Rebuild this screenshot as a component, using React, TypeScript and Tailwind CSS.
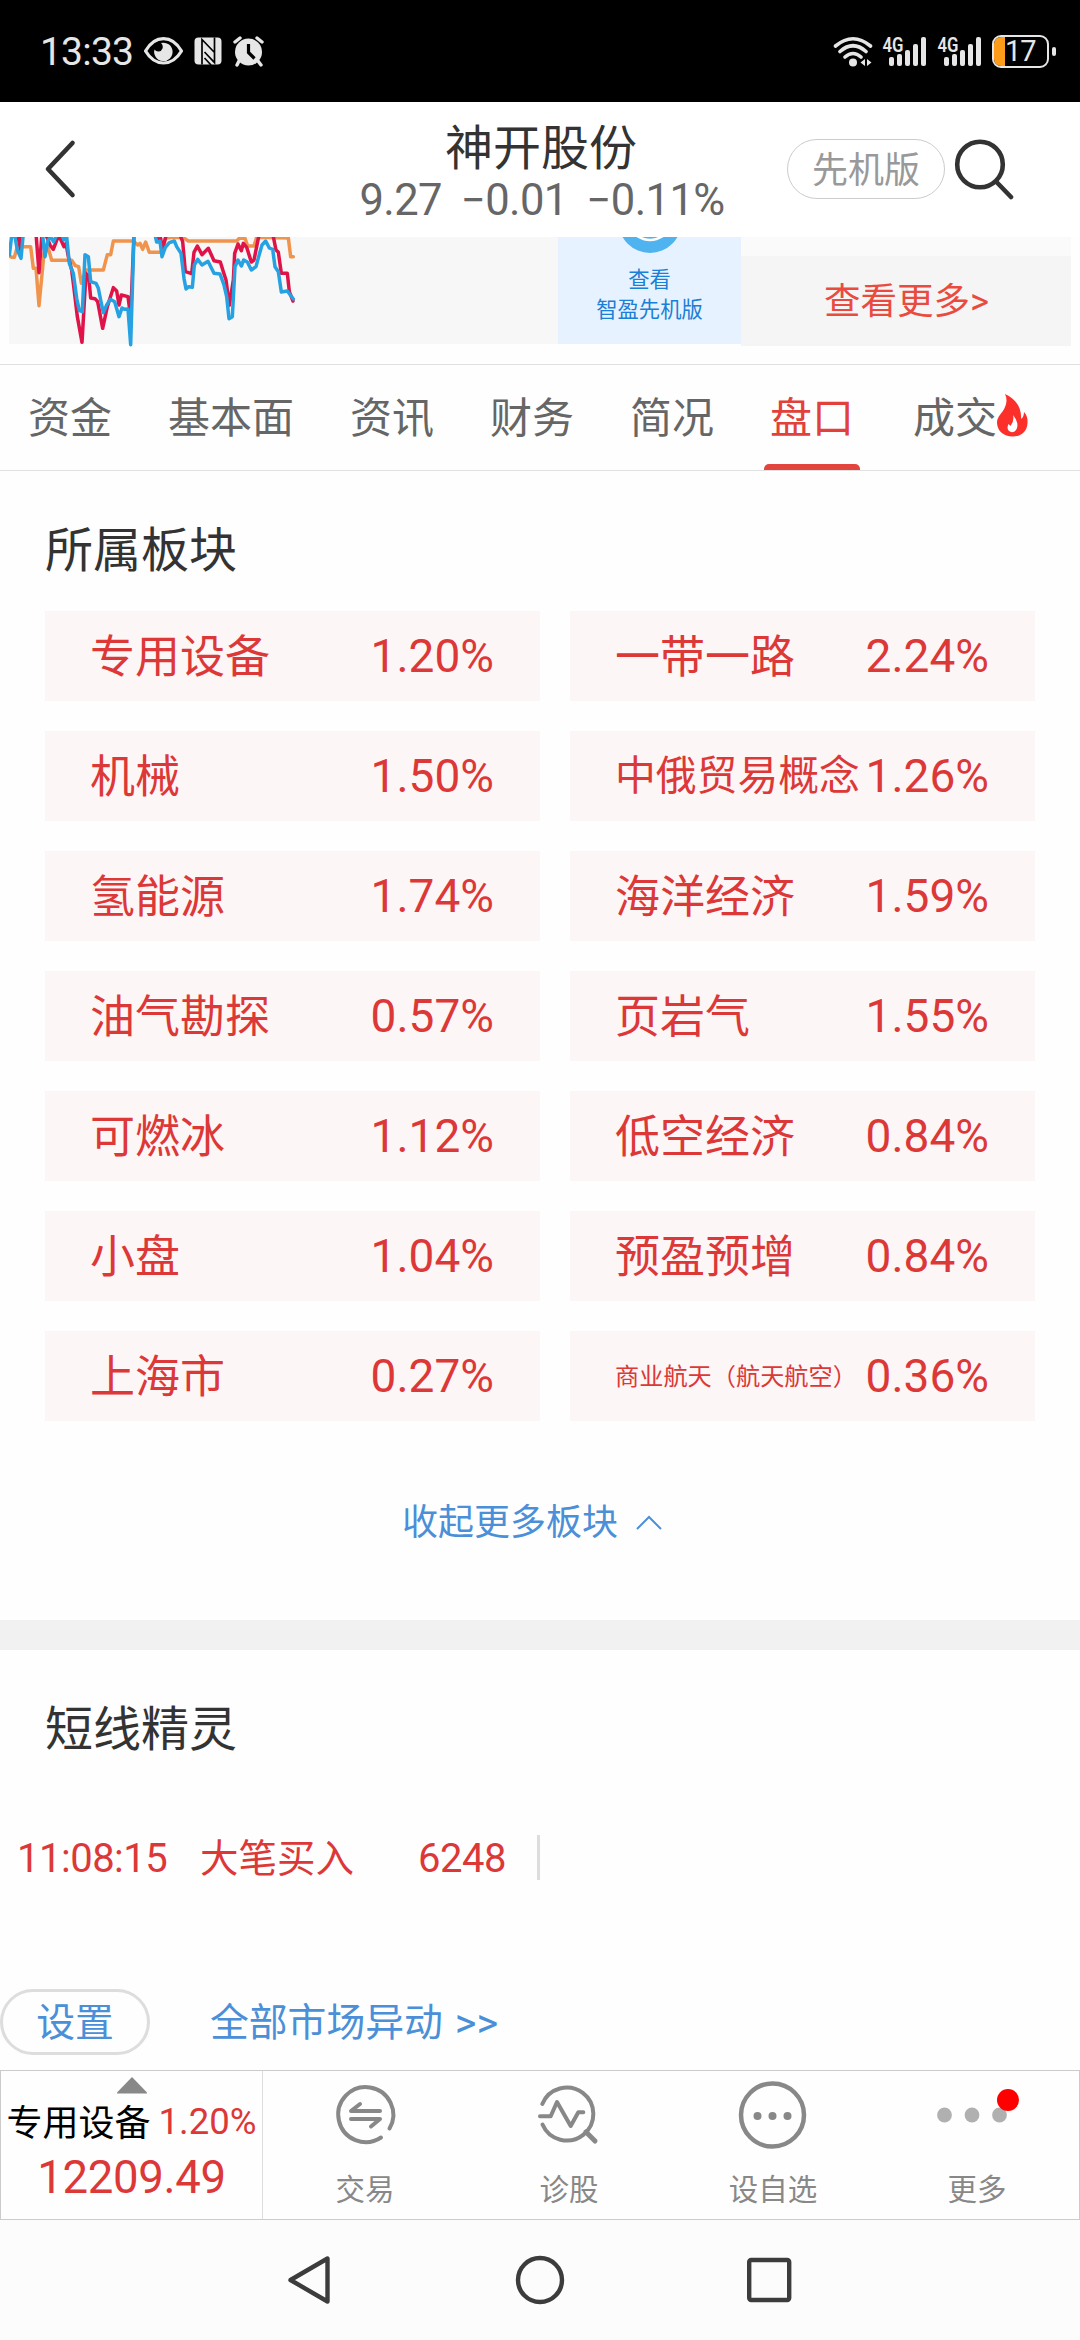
const sectors = [
  { name: "专用设备", pct: "1.20%" },
  { name: "一带一路", pct: "2.24%" },
  { name: "机械", pct: "1.50%" },
  { name: "中俄贸易概念", pct: "1.26%", size: "text-[40.8px]" },
  { name: "氢能源", pct: "1.74%" },
  { name: "海洋经济", pct: "1.59%" },
  { name: "油气勘探", pct: "0.57%" },
  { name: "页岩气", pct: "1.55%" },
  { name: "可燃冰", pct: "1.12%" },
  { name: "低空经济", pct: "0.84%" },
  { name: "小盘", pct: "1.04%" },
  { name: "预盈预增", pct: "0.84%" },
  { name: "上海市", pct: "0.27%" },
  { name: "商业航天（航天航空）", pct: "0.36%", size: "text-[24.2px]" },
];

const tabs = ["资金", "基本面", "资讯", "财务", "简况", "盘口", "成交"];

const Signal = () => (
  <svg width="46" height="40" viewBox="0 -4 46 40" fill="#e6e6e6">
    <text x="0.500" y="16.500" fontSize="20" fontWeight="600" textLength="21" lengthAdjust="spacingAndGlyphs">4G</text>
    <rect x="7" y="22" width="5" height="9" rx="2" />
    <rect x="15" y="19" width="5" height="12" rx="2" />
    <rect x="23" y="15" width="5" height="16" rx="2" />
    <rect x="31" y="9" width="5" height="22" rx="2" />
    <rect x="39" y="2" width="5" height="29" rx="2" />
  </svg>
);

const StatusBar = () => (
  <div className="flex h-[102px] items-center bg-black pl-[40px] pr-[24px] text-[#e6e6e6]">
    <span className="w-[103px] pt-[2px] text-[39px] leading-none tracking-[-0.8px]">13:33</span>
    <svg width="124" height="32" viewBox="0 0 124 32" fill="none">
      {/* eye */}
      <path d="M2.500 16C12-.5 29-.5 38.500 16 29 32 12 32 2.500 16Z" stroke="#e6e6e6" strokeWidth="3.200" strokeLinejoin="round" />
      <path d="M18 8a9.200 9.200 0 1 1-6.500 6.500a4.500 4.500 0 0 0 8 -1q1-3-1.500-5.500z" fill="#e6e6e6" />
      {/* nfc */}
      <rect x="51.500" y="2.500" width="27" height="27" rx="4" fill="#e6e6e6" />
      <path d="M59 29.500V4.500l12.500 13M71.500 2.500v25L61.500 17M61.500 23l6.500 7" stroke="#000" strokeWidth="1.700" />
      {/* alarm */}
      <path d="M92 7l5-4M114 3l5 4M96 26l-2 4M115 26l3 4" stroke="#e6e6e6" strokeWidth="3.400" strokeLinecap="round" />
      <circle cx="105.500" cy="17" r="13.500" fill="#e6e6e6" />
      <path d="M105.500 9v8.500l6 6" stroke="#000" strokeWidth="3.200" />
    </svg>
    <div className="ml-auto flex items-center">
      <svg width="40" height="32" viewBox="0 0 40 32" fill="none" stroke="#e6e6e6" strokeWidth="3.600">
        <path d="M2.500 11Q20-3.500 37.500 11M7 16.500Q20 5 33 16.500M12 22Q20 15 28 22" strokeLinecap="round" />
        <circle cx="20" cy="27.500" r="4" fill="#e6e6e6" stroke="none" />
        <path d="M32 24v7l-4.500-3.500zM34 24v7l4.500-3.500z" fill="#e6e6e6" stroke="none" />
      </svg>
      <span className="ml-[9px]"><Signal /></span>
      <span className="ml-[9px]"><Signal /></span>
      <div className="ml-[9px] flex h-[33px] w-[57px] items-center overflow-hidden rounded-[9px] border-2 border-[#e6e6e6]">
        <div className="h-full w-[11px] bg-[#ff9c1a]" />
        <span className="text-[29px] leading-none tracking-[-1px]">17</span>
      </div>
      <div className="ml-[3px] h-[9px] w-[4px] rounded-sm bg-[#e6e6e6]" />
    </div>
  </div>
);

const Header = () => (
  <div className="flex h-[135px] bg-white">
    <svg className="ml-[40px] mt-[37px]" width="40" height="60" viewBox="0 0 40 60" fill="none" stroke="#333" strokeWidth="4.600" strokeLinecap="round" strokeLinejoin="round">
      <path d="M32.500 4L8 30l24.500 26" />
    </svg>
    <div className="ml-[255px] mt-[18px] w-[412px] text-center">
      <h1 className="text-[48px] leading-[58px] text-[#333]">神开股份</h1>
      <div className="-mt-[2px] flex items-center justify-center gap-[19px] pl-[2px] text-[43.500px] leading-[50px] tracking-[-0.600px] text-[#666]">
        <span>9.27</span>
        <span>−0.01</span>
        <span>−0.11%</span>
      </div>
    </div>
    <div className="ml-[40px] mt-[37px] flex h-[60px] w-[158px] items-center justify-center rounded-full border border-[#ccc] pt-[3px] text-[36px] leading-none text-[#999]">
      先机版
    </div>
    <svg className="ml-[9px] mt-[36px]" width="62" height="62" viewBox="0 0 62 62" fill="none" stroke="#333" strokeWidth="4.600" strokeLinecap="round">
      <circle cx="26" cy="26.500" r="22.800" />
      <path d="M42.500 44L57 59" />
    </svg>
  </div>
);

const ChartStrip = () => (
  <div className="flex h-[127px] items-start pl-[9px]">
    <div className="h-[107px] w-[549px] bg-[#f7f7f7]">
      <svg width="549" height="110" viewBox="27 51 1647 330" fill="none" strokeWidth="10.500" strokeLinejoin="round" strokeLinecap="round">
        <polyline
          stroke="#f0944d"
          points="27,107 35,112 43,112 52,80 92,80 100,145 108,145 117,257 132,100 145,85 155,121 215,121 226,137 236,140 244,190 258,150 310,150 322,104 332,104 340,63 400,63 413,75 420,70 428,88 437,66 448,97 485,97 496,55 520,52 550,53 565,63 710,63 718,55 735,55 743,78 762,78 770,52 865,54 872,110 880,110"
        />
        <g stroke="#df1347">
          <polyline points="52,40 62,90 66,40" />
          <polyline points="108,40 117,158 126,40" />
          <polyline points="138,45 150,75 160,88 176,45 192,80 198,70 205,110 215,150 220,190 232,290 246,367 258,160 266,170 272,234 285,236 293,245 308,325 322,260 340,203 350,213 357,255 364,225 384,230 392,290 402,40" />
          <polyline points="468,40 475,65 482,55 487,90 500,40" />
          <polyline points="538,40 548,65 556,155 575,161 582,97 592,78 606,104 625,85 642,122 661,126 670,155 678,180 688,256 700,180 704,100 714,72 724,92 730,70 740,82 754,126 762,120 778,40" />
          <polyline points="818,40 828,90 835,97 844,160 862,160 868,215 879,243" />
        </g>
        <g stroke="#26a2e2">
          <polyline points="28,105 36,40 44,45 52,90 63,115 70,40" />
          <polyline points="128,45 135,110 144,60 152,52 161,65 172,40" />
          <polyline points="184,40 192,60 200,50 208,130 220,160 230,235 238,272 247,275 255,104 265,110 272,185 288,190 295,205 302,240 310,278 320,255 331,238 344,245 357,290 366,264 374,268 384,267 392,374 402,45" />
          <polyline points="464,40 470,66 480,64 486,110 496,82 508,68 523,63 530,80 543,100 552,175 558,207 566,200 577,202 583,135 593,118 606,135 624,124 642,160 660,162 672,195 680,230 687,296 697,290 705,140 714,120 724,138 731,120 742,126 754,150 768,140 776,110 786,75 797,63 808,84 818,88 825,140 835,155 844,216 862,213 880,237" />
        </g>
      </svg>
    </div>
    <div className="flex h-[107px] w-[183px] flex-col items-center bg-[#e6f2ff] text-[21.300px] leading-[30px] text-[#1a7fd6]">
      <svg className="mb-[1px] shrink-0" width="64" height="27" viewBox="0 0 64 27">
        <circle cx="32" cy="-15.500" r="31.500" fill="#4fb3f0" />
        <path d="M19 -1Q32 7 45 -1" fill="none" stroke="#fff" strokeWidth="2.500" />
      </svg>
      <span>查看</span>
      <span>智盈先机版</span>
    </div>
    <div className="w-[330px] bg-[#fafafa] pt-[19px]">
      <div className="flex h-[90px] items-center bg-[#f5f5f5] pl-[83px] pt-[3px] text-[36.500px] leading-none text-[#ea4b3f]">查看更多&gt;</div>
    </div>
  </div>
);

const Tabs = () => (
  <div className="flex h-[107px] gap-[56px] border-y border-[#e0e0e0] pl-[28px]">
    {tabs.map((tab) => (
      <div
        key={tab}
        className={
          tab === "盘口"
            ? "relative mr-[3px] flex shrink-0 items-center pt-[3px] text-[42px] leading-none text-[#e2403a]"
            : "relative flex shrink-0 items-center pt-[3px] text-[42px] leading-none text-[#666]"
        }
      >
        {tab}
        {tab === "盘口" && <span className="absolute -left-[6px] bottom-0 h-[6px] w-[96px] rounded-t-[5px] bg-[#e2443e]" />}
        {tab === "成交" && (
          <svg className="absolute left-[84px] top-[29px]" width="31" height="43" viewBox="0 0 31 43">
            <path d="M8 0C17 4 25 12 24 25q3-2 3-7 4 4 3.500 11C30 38 24 42.500 15.500 42.500S0 37 0 28.500C0 22 6 19 8 13 10 8 10 4 8 0z" fill="#fc302b" />
            <path d="M16 21q7 9 3 15c-3 4-8 2-8.500-2 0-2 1-4 1-4l2 2q4-5 2.500-11z" fill="#fff" />
          </svg>
        )}
      </div>
    ))}
  </div>
);

const Sectors = () => (
  <section className="h-[1149px] px-[45px]">
    <h2 className="pt-[48px] text-[48px] leading-[64px] text-[#333]">所属板块</h2>
    <div className="mt-[28px] grid grid-cols-[495px_465px] gap-[30px] text-[#dc3838]">
      {sectors.map((s) => (
        <div key={s.name} className="flex h-[90px] items-center justify-between whitespace-nowrap bg-[#fdf6f6] pl-[45px] pr-[46px]">
          <span className={s.size ? `pt-[2px] ${s.size}` : "pt-[4px] text-[45px]"}>{s.name}</span>
          <span className="pt-px text-[46px]">{s.pct}</span>
        </div>
      ))}
    </div>
    <div className="mt-[75px] flex h-[54px] items-center pl-[357px] text-[36px] leading-none text-[#4a8fd8]">
      收起更多板块
      <svg className="ml-[17px]" width="28" height="18" viewBox="0 0 28 18" fill="none" stroke="#4a8fd8" strokeWidth="2">
        <path d="M2 15L14 3l12 12" />
      </svg>
    </div>
  </section>
);

const ShortTerm = () => (
  <section className="h-[420px]">
    <h2 className="pl-[45px] pt-[48px] text-[48px] leading-[64px] text-[#333]">短线精灵</h2>
    <div className="mt-[73px] flex h-[45px] items-center text-[40px] leading-none text-[#dc3838]">
      <span className="w-[200px] pl-[17px] pt-[3px] tracking-[-0.5px]">11:08:15</span>
      <span className="w-[218px] pt-[3px] text-[38.500px]">大笔买入</span>
      <span className="w-[119px] pt-[3px] tracking-[-0.5px]">6248</span>
      <span className="h-[45px] w-[3px] bg-[#ddd]" />
    </div>
    <div className="mt-[109px] flex h-[66px] items-center text-[38.800px] leading-none text-[#4a8fd8]">
      <span className="flex h-[66px] w-[150px] items-center justify-center rounded-full border-[3px] border-[#ddd] pt-[3px]">设置</span>
      <span className="ml-[60px] pt-[3px]">全部市场异动</span>
      <span className="ml-[12px] pt-px text-[41.500px]">&gt;&gt;</span>
    </div>
  </section>
);

const icons = {
  trade: (
    <svg width="80" height="80" viewBox="0 0 80 80" fill="none" stroke="#888" strokeWidth="4" strokeLinecap="round" strokeLinejoin="round">
      <path d="M64.500 53.500A27.500 27.500 0 1 0 56 62.500" />
      <path d="M55 36H26l9-7M26 44h29l-9 7.500" />
    </svg>
  ),
  diagnose: (
    <svg width="80" height="80" viewBox="0 0 80 80" fill="none" stroke="#888" strokeWidth="4" strokeLinecap="round" strokeLinejoin="round">
      <path d="M13.300 29A26.500 26.500 0 1 1 13.500 49.500" />
      <path d="M11 41.300h10.700L28 27l13.700 24 7.600-13.700h5" />
      <path d="M57 57l9 9" strokeWidth="5" />
    </svg>
  ),
  watch: (
    <svg width="80" height="80" viewBox="0 0 80 80" fill="#888">
      <circle cx="39.500" cy="40" r="31.500" fill="none" stroke="#888" strokeWidth="4.500" />
      <circle cx="24.500" cy="41" r="4" />
      <circle cx="39.500" cy="41" r="4" />
      <circle cx="54.500" cy="41" r="4" />
    </svg>
  ),
  more: (
    <svg width="84" height="80" viewBox="-2 0 84 80" fill="#b0b0b0">
      <circle cx="7.500" cy="40" r="7.400" />
      <circle cx="35" cy="40" r="7.400" />
      <circle cx="62.500" cy="40" r="7.400" />
      <circle cx="71" cy="25" r="11" fill="#f00" />
    </svg>
  ),
};

const actions = [
  { label: "交易", icon: icons.trade },
  { label: "诊股", icon: icons.diagnose },
  { label: "设自选", icon: icons.watch },
  { label: "更多", icon: icons.more },
];

const BottomBar = () => (
  <div className="flex h-[150px] border border-[#ccc]">
    <div className="flex w-[262px] flex-col items-center border-r border-[#ddd] pt-[6px]">
      <svg width="30" height="17" viewBox="0 0 30 17" fill="#888"><path d="M15 0L30 15.500v1H0v-1z" /></svg>
      <div className="mt-[5px] flex h-[46px] items-center gap-[8px] whitespace-nowrap leading-none">
        <span className="pt-[3px] text-[36px] text-black">专用设备</span>
        <span className="pt-px text-[36.500px] text-[#dc3838]">1.20%</span>
      </div>
      <div className="mt-[8px] text-[45.500px] leading-[50px] tracking-[-0.3px] text-[#dc3838]">12209.49</div>
    </div>
    {actions.map((a) => (
      <div key={a.label} className="flex flex-1 flex-col items-center pt-[4px]">
        {a.icon}
        <span className="mt-[16px] text-[29.500px] leading-[38px] text-[#888]">{a.label}</span>
      </div>
    ))}
  </div>
);

const NavBar = () => (
  <div className="flex h-[120px] items-center gap-[177px] bg-[#fcfcfc] pl-[284px]">
    <svg width="52" height="52" viewBox="0 0 52 52" fill="none" stroke="#3c3c3c" strokeWidth="4.400" strokeLinejoin="round">
      <path d="M6.500 26L43.500 4.500v43z" />
    </svg>
    <svg width="52" height="52" viewBox="0 0 52 52" fill="none" stroke="#3c3c3c" strokeWidth="4.400">
      <circle cx="27" cy="26" r="22" />
    </svg>
    <svg width="52" height="52" viewBox="0 0 52 52" fill="none" stroke="#3c3c3c" strokeWidth="4.400">
      <rect x="7.200" y="6" width="40" height="40" rx="2" />
    </svg>
  </div>
);

const App = () => (
  <div className="h-[2340px] w-[1080px] overflow-hidden bg-[#fefefe] font-['Roboto','Noto_Sans_CJK_SC',sans-serif]">
    <StatusBar />
    <Header />
    <ChartStrip />
    <Tabs />
    <Sectors />
    <div className="h-[30px] bg-[#f1f1f1]" />
    <ShortTerm />
    <BottomBar />
    <NavBar />
  </div>
);

export default App;
